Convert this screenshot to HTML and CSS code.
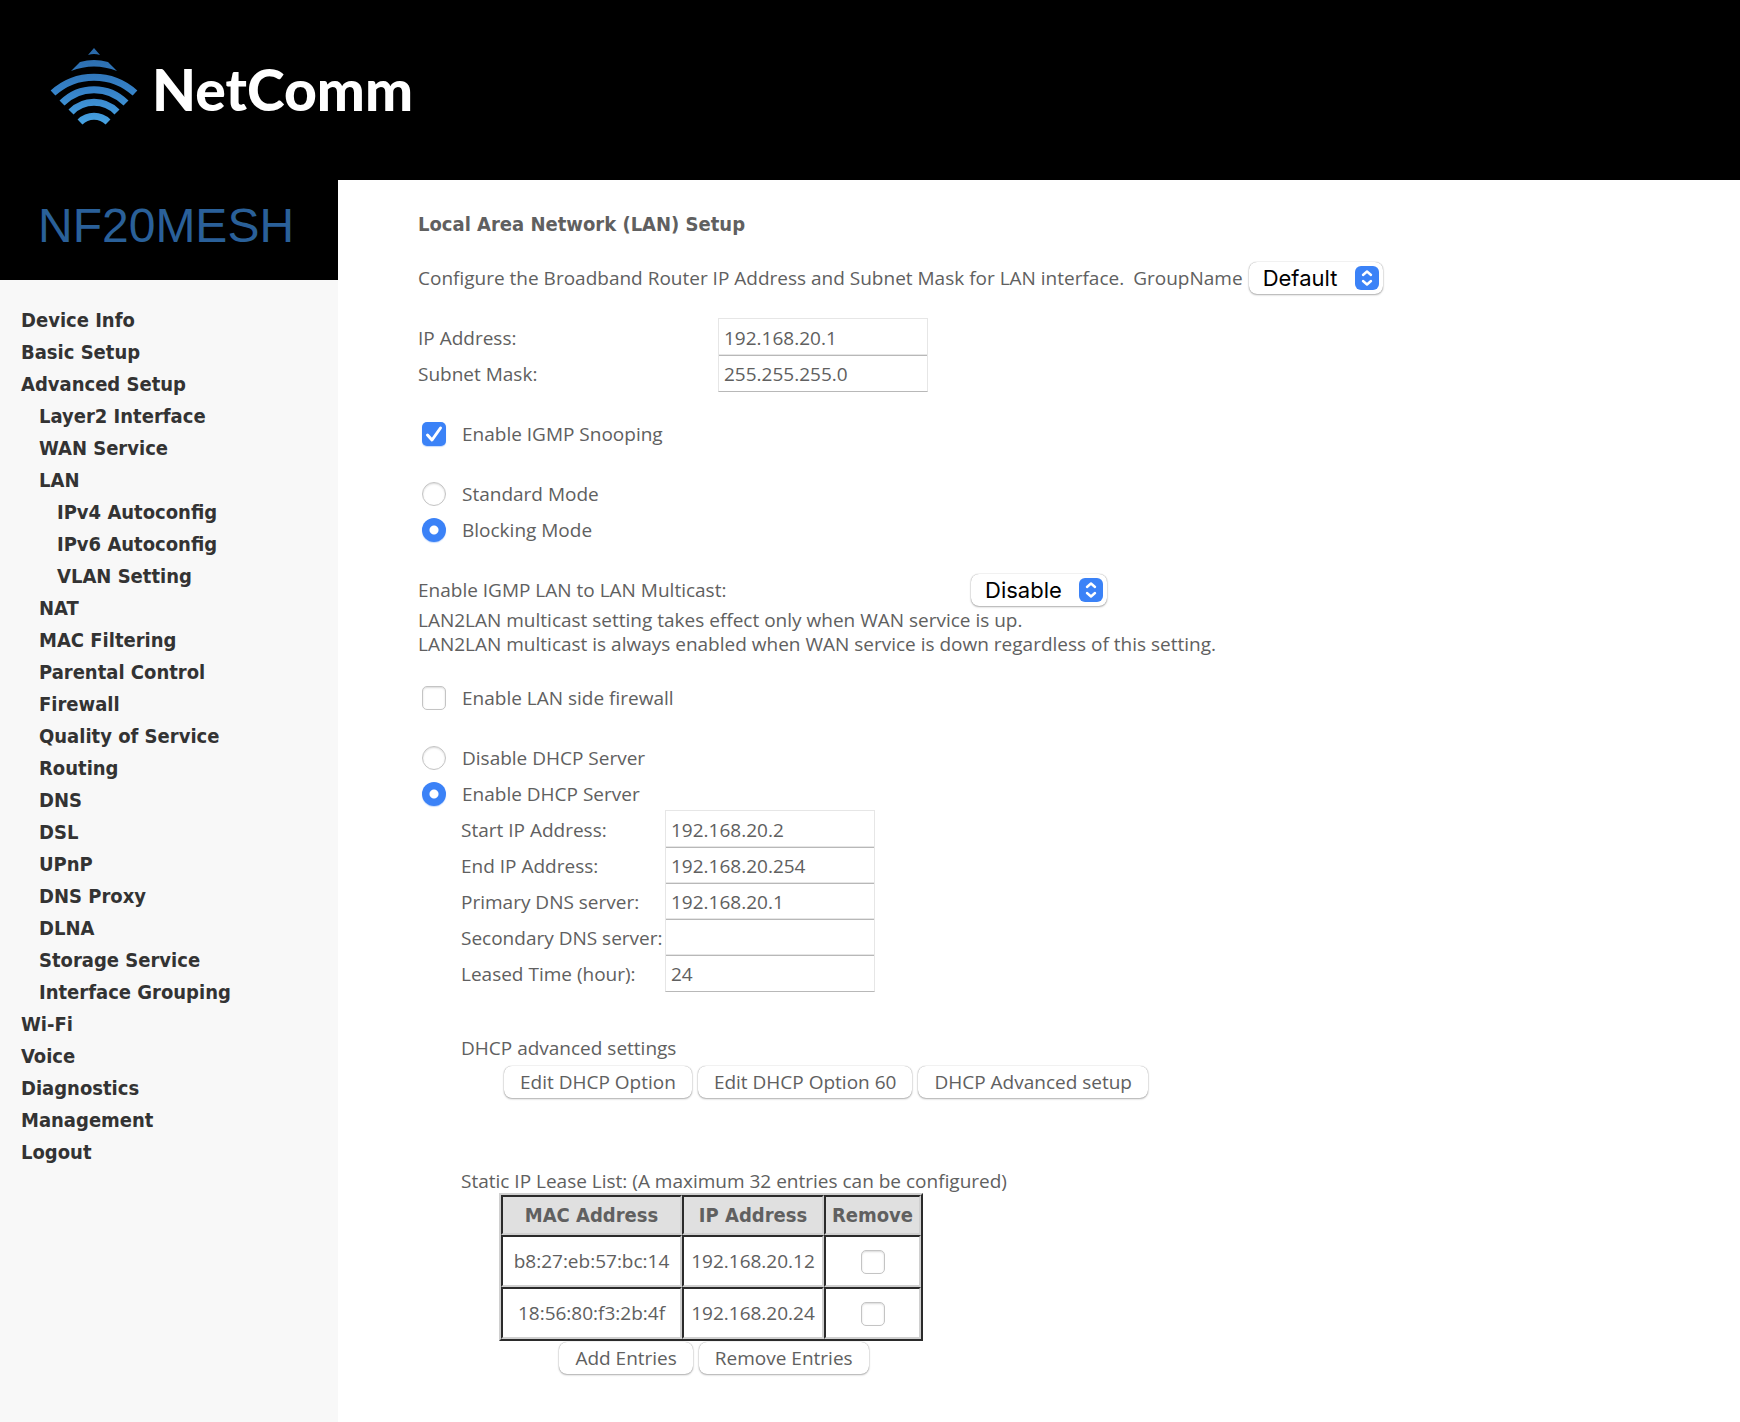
FILE: index.html
```
<!DOCTYPE html>
<html lang="en">
<head>
<meta charset="utf-8">
<meta name="viewport" content="width=device-width, initial-scale=1">
<title>NetComm NF20MESH - LAN Setup</title>
<link rel="stylesheet" href="styles.css">
</head>
<body>
<header class="banner">
  <svg class="banner-mark" viewBox="0 0 88 80" aria-hidden="true">
    <defs>
      <linearGradient id="wave" gradientUnits="userSpaceOnUse" x1="0" y1="0" x2="0" y2="80">
        <stop offset="0" stop-color="#2a68a8"/>
        <stop offset="0.5" stop-color="#3580c6"/>
        <stop offset="1" stop-color="#4aa8e6"/>
      </linearGradient>
    </defs>
    <path fill="url(#wave)" d="M44 -1 L50 6 Q44 4 38 6 Z"/>
    <path fill="url(#wave)" d="M21 22 L30 13 Q44 9 58 13 L67 22 Q44 13 21 22 Z"/>
    <g fill="none" stroke="url(#wave)" stroke-width="7">
      <path d="M3 44 A61 61 0 0 1 85 44"/>
      <path d="M12 54 A45 45 0 0 1 76 54"/>
      <path d="M21 63 A32 32 0 0 1 67 63"/>
      <path d="M30 73 A20 20 0 0 1 58 73"/>
    </g>
  </svg>
  <span class="banner-name">NetComm</span>
</header>
<div class="layout">
  <aside class="sidebar">
    <div class="model">NF20MESH</div>
    <nav aria-label="Main">
      <ul class="menu">
        <li><a href="#">Device Info</a></li>
        <li><a href="#">Basic Setup</a></li>
        <li><a href="#">Advanced Setup</a>
          <ul>
            <li><a href="#">Layer2 Interface</a></li>
            <li><a href="#">WAN Service</a></li>
            <li><a href="#">LAN</a>
              <ul>
                <li><a href="#">IPv4 Autoconfig</a></li>
                <li><a href="#">IPv6 Autoconfig</a></li>
                <li><a href="#">VLAN Setting</a></li>
              </ul>
            </li>
            <li><a href="#">NAT</a></li>
            <li><a href="#">MAC Filtering</a></li>
            <li><a href="#">Parental Control</a></li>
            <li><a href="#">Firewall</a></li>
            <li><a href="#">Quality of Service</a></li>
            <li><a href="#">Routing</a></li>
            <li><a href="#">DNS</a></li>
            <li><a href="#">DSL</a></li>
            <li><a href="#">UPnP</a></li>
            <li><a href="#">DNS Proxy</a></li>
            <li><a href="#">DLNA</a></li>
            <li><a href="#">Storage Service</a></li>
            <li><a href="#">Interface Grouping</a></li>
          </ul>
        </li>
        <li><a href="#">Wi-Fi</a></li>
        <li><a href="#">Voice</a></li>
        <li><a href="#">Diagnostics</a></li>
        <li><a href="#">Management</a></li>
        <li><a href="#">Logout</a></li>
      </ul>
    </nav>
  </aside>
  <main class="content">
    <form class="form">
      <h1>Local Area Network (LAN) Setup</h1>
      <div class="row intro">
        <span>Configure the Broadband Router IP Address and Subnet Mask for LAN interface.</span>
        <label class="group-label" for="group">GroupName</label>
        <select id="group"><option>Default</option></select>
      </div>

      <div class="fields lan-fields">
        <label for="ip">IP Address:</label><input type="text" id="ip" value="192.168.20.1">
        <label for="mask">Subnet Mask:</label><input type="text" id="mask" value="255.255.255.0">
      </div>

      <div class="block">
        <label class="row option"><input type="checkbox" checked>Enable IGMP Snooping</label>
      </div>

      <div class="block">
        <label class="row option"><input type="radio" name="igmp">Standard Mode</label>
        <label class="row option"><input type="radio" name="igmp" checked>Blocking Mode</label>
      </div>

      <div class="block">
        <div class="row multicast">
          <label for="multicast">Enable IGMP LAN to LAN Multicast:</label>
          <select id="multicast"><option>Disable</option></select>
        </div>
        <p>LAN2LAN multicast setting takes effect only when WAN service is up.<br>LAN2LAN multicast is always enabled when WAN service is down regardless of this setting.</p>
      </div>

      <div class="block">
        <label class="row option"><input type="checkbox">Enable LAN side firewall</label>
      </div>

      <div class="block">
        <label class="row option"><input type="radio" name="dhcp">Disable DHCP Server</label>
        <label class="row option"><input type="radio" name="dhcp" checked>Enable DHCP Server</label>
      </div>

      <div class="dhcp">
        <div class="fields dhcp-fields">
          <label for="start">Start IP Address:</label><input type="text" id="start" value="192.168.20.2">
          <label for="end">End IP Address:</label><input type="text" id="end" value="192.168.20.254">
          <label for="dns1">Primary DNS server:</label><input type="text" id="dns1" value="192.168.20.1">
          <label for="dns2">Secondary DNS server:</label><input type="text" id="dns2" value="">
          <label for="lease">Leased Time (hour):</label><input type="text" id="lease" value="24">
        </div>

        <p class="advanced-title">DHCP advanced settings</p>
        <div class="buttons advanced-buttons">
          <button type="button">Edit DHCP Option</button>
          <button type="button">Edit DHCP Option 60</button>
          <button type="button">DHCP Advanced setup</button>
        </div>

        <p class="lease-title">Static IP Lease List: (A maximum 32 entries can be configured)</p>
        <div class="lease">
          <table>
            <thead>
              <tr><th scope="col">MAC Address</th><th scope="col">IP Address</th><th scope="col">Remove</th></tr>
            </thead>
            <tbody>
              <tr><td>b8:27:eb:57:bc:14</td><td>192.168.20.12</td><td><input type="checkbox" aria-label="Remove b8:27:eb:57:bc:14"></td></tr>
              <tr><td>18:56:80:f3:2b:4f</td><td>192.168.20.24</td><td><input type="checkbox" aria-label="Remove 18:56:80:f3:2b:4f"></td></tr>
            </tbody>
          </table>
          <div class="buttons lease-buttons">
            <button type="button">Add Entries</button>
            <button type="button">Remove Entries</button>
          </div>
        </div>
      </div>
    </form>
  </main>
</div>
</body>
</html>
```
FILE: styles.css
```
* {
  box-sizing: border-box;
}

body {
  margin: 0;
  min-height: 100vh;
  display: flex;
  flex-direction: column;
  background: #fff;
  color: #606060;
  font: 19px/24px "Open Sans", "Noto Sans", sans-serif;
}

h1,
p,
ul {
  margin: 0;
  padding: 0;
}

/* Banner */
.banner {
  display: flex;
  align-items: center;
  gap: 14px;
  height: 180px;
  padding: 0 50px 2px;
  background: #000;
}

.banner-mark {
  width: 88px;
  height: 80px;
  overflow: visible;
}

.banner-name {
  color: #fff;
  font: 900 57px/56px Lato, sans-serif;
}

/* Sidebar */
.layout {
  flex: 1;
  display: grid;
  grid-template-columns: 338px minmax(0, 1fr);
}

.sidebar {
  background: #f8f8f8;
}

.model {
  height: 100px;
  padding-left: 38px;
  background: #000;
  color: #2a6099;
  font: 48px/92px "Liberation Sans", sans-serif;
}

.menu {
  padding: 24px 21px;
  list-style: none;
  font: bold 20px/32px "DejaVu Sans Condensed", "DejaVu Sans", sans-serif;
}

.menu ul {
  padding-left: 18px;
  list-style: none;
}

.menu a {
  color: #333;
  text-decoration: none;
}

/* Form */
.content {
  padding: 32px 24px 40px 80px;
}

h1 {
  font: bold 20px/24px "DejaVu Sans Condensed", "DejaVu Sans", sans-serif;
}

.row {
  display: flex;
  align-items: center;
  min-height: 36px;
}

.intro {
  margin-top: 24px;
}

.group-label {
  margin: 0 6px 0 9px;
}

.block {
  margin-top: 24px;
}

.fields {
  display: grid;
  grid-auto-rows: 36px;
  align-items: center;
}

.lan-fields {
  grid-template-columns: 300px 210px;
  margin-top: 24px;
}

.dhcp-fields {
  grid-template-columns: 204px 210px;
}

input[type="text"] {
  width: 100%;
  height: 38px;
  padding: 2px 5px 0;
  align-self: end;
  border: 1px solid #e6e6e6;
  border-bottom-color: #b8b8b8;
  background: transparent;
  color: #606060;
  font: inherit;
}

.option {
  gap: 16px;
  padding-left: 4px;
}

input[type="checkbox"],
input[type="radio"] {
  appearance: none;
  width: 24px;
  height: 24px;
  margin: 0;
  border: 1px solid #c4c4c4;
  border-radius: 5px;
  background: #fff center / 24px 24px no-repeat;
  box-shadow: inset 0 1px 2px rgba(0, 0, 0, 0.15);
}

input[type="radio"] {
  border-radius: 50%;
}

input[type="checkbox"]:checked,
input[type="radio"]:checked {
  border: 0;
  background-color: #3b82f7;
  box-shadow: 0 1px 1px rgba(59, 130, 247, 0.3);
}

input[type="checkbox"]:checked {
  background-image: url("data:image/svg+xml,%3Csvg xmlns='http://www.w3.org/2000/svg' viewBox='0 0 24 24'%3E%3Cpath d='M5.5 13 L10 18 L18.500 6' fill='none' stroke='white' stroke-width='3' stroke-linecap='round' stroke-linejoin='round'/%3E%3C/svg%3E");
}

input[type="radio"]:checked {
  background-image: radial-gradient(circle, #fff 4px, transparent 5px);
}

select {
  appearance: none;
  height: 32px;
  padding: 0 45px 0 14px;
  border: 0;
  border-radius: 8px;
  background: #fff right 4px center / 24px 24px no-repeat;
  background-image: url("data:image/svg+xml,%3Csvg xmlns='http://www.w3.org/2000/svg' viewBox='0 0 24 24'%3E%3Crect width='24' height='24' rx='6' fill='%233b82f7'/%3E%3Cpath d='M8 9 L12 5.500 L16 9 M8 15 L12 18.500 L16 15' fill='none' stroke='white' stroke-width='2.400' stroke-linecap='round' stroke-linejoin='round'/%3E%3C/svg%3E");
  box-shadow: 0 0 1px rgba(0, 0, 0, 0.4), 0 1px 2px rgba(0, 0, 0, 0.3);
  color: #000;
  font: 22px/32px Inter, sans-serif;
}

.multicast label {
  width: 553px;
}

.dhcp {
  padding-left: 43px;
}

.advanced-title {
  margin-top: 44px;
}

.buttons {
  display: flex;
  gap: 6px;
}

.advanced-buttons {
  margin: 6px 0 0 43px;
}

button {
  height: 32px;
  padding: 0 16px;
  border: 0;
  border-radius: 8px;
  background: #fff;
  box-shadow: 0 0 1px rgba(0, 0, 0, 0.4), 0 1px 2px rgba(0, 0, 0, 0.3);
  color: #606060;
  font: inherit;
}

.lease-title {
  margin-top: 71px;
}

.lease {
  width: 424px;
  margin-left: 38px;
}

table {
  width: 100%;
  border: 2px solid;
  border-color: #d0d0d0 #2b2b2b #2b2b2b #d0d0d0;
  border-spacing: 0;
  text-align: center;
}

th,
td {
  height: 52px;
  padding: 0;
  border: 2px solid;
  border-color: #2b2b2b #d0d0d0 #d0d0d0 #2b2b2b;
}

th {
  width: 142px;
  height: 40px;
  background: #e0e0e0;
  font: bold 20px/24px "DejaVu Sans Condensed", "DejaVu Sans", sans-serif;
}

th:first-child {
  width: 181px;
}

th:last-child {
  width: 97px;
}

td input[type="checkbox"] {
  vertical-align: middle;
}

.lease-buttons {
  justify-content: center;
  margin-top: 1px;
  padding-left: 6px;
}
```
